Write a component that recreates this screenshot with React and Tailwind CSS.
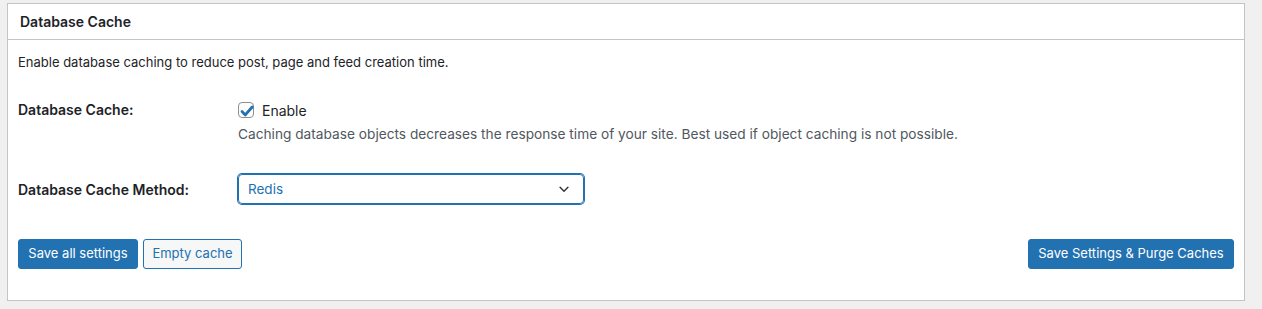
import React from 'react';

const font = { fontFamily: 'Inter, "Liberation Sans", sans-serif' };

const Checkbox = ({ checked = true }) => (
  <span className="relative inline-flex h-4 w-4 items-center justify-center rounded-[4px] border border-[#8c8f94] bg-white">
    {checked && (
      <svg viewBox="0 0 20 20" className="absolute -left-[2px] -top-[2px] h-5 w-5">
        <path d="M5 10.6l3.3 3.3L15.2 6" fill="none" stroke="#2271b1" strokeWidth="2.8" strokeLinecap="round" strokeLinejoin="round" />
      </svg>
    )}
  </span>
);

const Chevron = () => (
  <svg viewBox="0 0 16 16" className="h-[14px] w-[14px]">
    <path d="M3.5 6l4.5 4.5L12.5 6" fill="none" stroke="#2c3338" strokeWidth="1.6" strokeLinecap="round" strokeLinejoin="round" />
  </svg>
);

export default function App() {
  return (
    <div className="h-[309px] w-[1262px] overflow-hidden bg-[#f0f0f1] pt-[3px] pl-[7px] text-[#1d2327]" style={font}>
      <div className="flex h-[298px] w-[1238px] flex-col border border-[#c3c4c7] bg-white">
        <div className="flex h-[36px] items-center border-b border-[#c3c4c7] px-3">
          <h3 className="text-[14px] font-semibold">Database Cache</h3>
        </div>

        <div className="flex flex-1 flex-col px-[10px] pt-[12px]">
          <p className="text-[13px] leading-5">Enable database caching to reduce post, page and feed creation time.</p>

          <div className="mt-[26px] flex">
            <div className="w-[220px] pt-[2px] text-[14px] font-semibold leading-5">Database Cache:</div>
            <div className="flex flex-col">
              <label className="flex h-6 items-center gap-2 text-[14px]">
                <Checkbox />
                Enable
              </label>
              <p className="mt-[2px] text-[13.7px] leading-5 text-[#50575e]">
                Caching database objects decreases the response time of your site. Best used if object caching is not possible.
              </p>
            </div>
          </div>

          <div className="mt-[30px] flex items-center">
            <div className="w-[220px] text-[14px] font-semibold">Database Cache Method:</div>
            <div className="flex h-[30px] w-[346px] items-center justify-between rounded-[4px] border border-[#2271b1] pl-[9px] pr-[12px] shadow-[0_0_0_1px_#2271b1]">
              <span className="text-[13.5px] text-[#2271b1]">Redis</span>
              <Chevron />
            </div>
          </div>

          <div className="mt-[35px] flex items-center justify-between">
            <div className="flex gap-[5px]">
              <button className="h-[30px] w-[120px] rounded-[3px] border border-[#2271b1] bg-[#2271b1] text-[13px] text-white">Save all settings</button>
              <button className="h-[30px] w-[99px] rounded-[3px] border border-[#2271b1] bg-[#f6f7f7] text-[13px] text-[#2271b1]">Empty cache</button>
            </div>
            <button className="h-[30px] w-[206px] rounded-[3px] border border-[#2271b1] bg-[#2271b1] text-[13px] text-white">Save Settings &amp; Purge Caches</button>
          </div>
        </div>
      </div>
    </div>
  );
}
